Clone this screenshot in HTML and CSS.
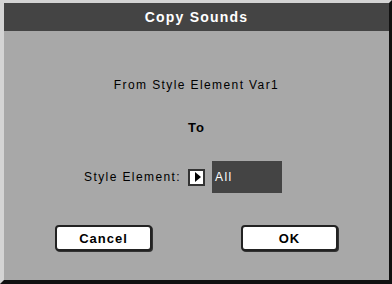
FILE: index.html
```html
<!DOCTYPE html>
<html lang="en">
<head>
    <meta charset="UTF-8">
    <meta name="viewport" content="width=device-width, initial-scale=1.0">
    <title>Copy Sounds</title>
    <link rel="stylesheet" href="styles.css">
</head>
<body>
    <div class="dialog">
        <div class="title-bar">Copy Sounds</div>
        <div class="dialog-body">
            <div class="line from-line">From Style Element Var1</div>
            <div class="line to-line">To</div>
            <div class="target-row">
                <span class="target-label">Style Element:</span>
                <span class="arrow-box"><span class="arrow"></span></span>
                <span class="target-field">All</span>
            </div>
            <div class="button-row">
                <button class="dlg-button">Cancel</button>
                <button class="dlg-button">OK</button>
            </div>
        </div>
    </div>
</body>
</html>
```

FILE: styles.css
```css
body {
    margin: 0;
    background-color: #a8a8a8;
    font-family: "Liberation Sans", Arial, sans-serif;
}

.dialog {
    width: 392px;
    height: 284px;
    box-sizing: border-box;
    border-style: solid;
    border-width: 3px 3px 4px 4px;
    border-color: #d4d4d4 #111 #111 #d4d4d4;
    background-color: #a8a8a8;
    display: flex;
    flex-direction: column;
}

.title-bar {
    height: 28px;
    background-color: #444;
    color: #fff;
    font-weight: bold;
    font-size: 14px;
    letter-spacing: 1.2px;
    display: flex;
    justify-content: center;
    align-items: center;
}

.dialog-body {
    flex: 1;
    display: flex;
    flex-direction: column;
    color: #000;
    font-size: 12px;
    letter-spacing: 1.4px;
}

.line {
    height: 14px;
    line-height: 14px;
    text-align: center;
}

.from-line {
    margin-top: 47px;
}

.to-line {
    margin-top: 29px;
    font-weight: bold;
    font-size: 13px;
    letter-spacing: 1px;
}

.target-row {
    margin-top: 26px;
    display: flex;
    align-items: center;
    height: 32px;
}

.target-label {
    width: 177px;
    text-align: right;
}

.arrow-box {
    margin-left: 7px;
    width: 17px;
    height: 17px;
    box-sizing: border-box;
    border: 2px solid #333;
    background-color: #fff;
    display: flex;
    justify-content: center;
    align-items: center;
}

.arrow {
    width: 0;
    height: 0;
    margin-left: 2px;
    border-top: 5px solid transparent;
    border-bottom: 5px solid transparent;
    border-left: 6px solid #000;
}

.target-field {
    margin-left: 7px;
    width: 70px;
    height: 32px;
    box-sizing: border-box;
    padding-left: 3px;
    background-color: #444;
    color: #fff;
    display: flex;
    align-items: center;
}

.button-row {
    margin-top: 32px;
    padding: 0 51px;
    display: flex;
    justify-content: space-between;
}

.dlg-button {
    width: 97px;
    height: 26px;
    box-sizing: border-box;
    border: 2px solid #222;
    border-radius: 4px;
    background-color: #fff;
    box-shadow: 1px 1px 0 #333;
    font-family: "Liberation Sans", Arial, sans-serif;
    font-weight: bold;
    font-size: 13px;
    letter-spacing: 1px;
    color: #000;
    padding: 0;
}
```
